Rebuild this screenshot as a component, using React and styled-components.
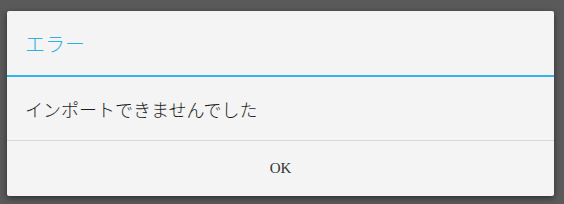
import styled, { createGlobalStyle } from "styled-components";

const GlobalStyle = createGlobalStyle`
  html, body {
    margin: 0;
    padding: 0;
    background: #5a5a5a;
  }
  body {
    width: 564px;
    height: 204px;
    overflow: hidden;
  }
`;

const Page = styled.div`
  padding: 11px 0 0 7px;
`;

const Dialog = styled.div`
  width: 547px;
  height: 185px;
  background: #f4f4f4;
  border-radius: 2px;
  box-shadow: 0 2px 6px rgba(0, 0, 0, 0.5);
  display: flex;
  flex-direction: column;
  font-family: "Noto Sans CJK JP", "Noto Sans", sans-serif;
  font-weight: 300;
`;

const Header = styled.div`
  height: 64px;
  border-bottom: 2px solid #33b5e5;
  display: flex;
  align-items: center;
  padding: 0 18px;
  color: #2eb2e6;
  font-size: 20px;
`;

const Message = styled.div`
  height: 63px;
  border-bottom: 1px solid #d8d8d8;
  display: flex;
  align-items: center;
  padding: 0 18px;
  color: #1e1e1e;
  font-size: 18px;
`;

const Actions = styled.div`
  flex: 1;
  display: flex;
`;

const Button = styled.button`
  flex: 1;
  border: none;
  background: transparent;
  font-family: "Liberation Serif", serif;
  font-size: 15px;
  color: #333;
  padding: 0;
  cursor: pointer;
`;

export default function App() {
  return (
    <>
      <GlobalStyle />
      <Page>
        <Dialog>
          <Header>エラー</Header>
          <Message>インポートできませんでした</Message>
          <Actions>
            <Button>OK</Button>
          </Actions>
        </Dialog>
      </Page>
    </>
  );
}
